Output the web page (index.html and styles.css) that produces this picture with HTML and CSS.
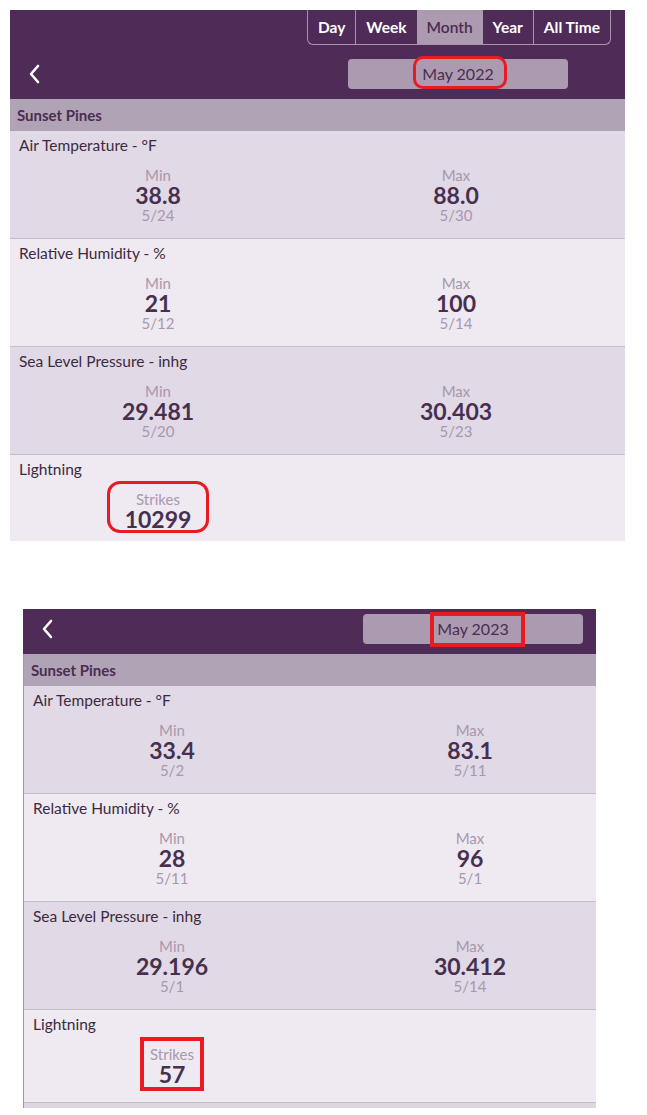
FILE: index.html
```html
<!DOCTYPE html>
<html lang="en">
<head>
<meta charset="utf-8">
<title>Sunset Pines – Monthly Summary</title>
<link rel="stylesheet" href="styles.css">
</head>
<body>
<div class="panel panel-a">
  <div class="header header-a">
    <div class="tabs-row">
      <div class="tabs">
        <span class="tab">Day</span>
        <span class="tab">Week</span>
        <span class="tab active">Month</span>
        <span class="tab">Year</span>
        <span class="tab">All Time</span>
      </div>
    </div>
    <div class="date-row">
      <div class="back">
        <svg width="12" height="20" viewBox="0 0 12 20"><path d="M10 2 L3 10 L10 18" fill="none" stroke="#fff" stroke-width="2.6" stroke-linecap="round" stroke-linejoin="round"/></svg>
      </div>
      <div class="pill"><span class="mark mark-date-a">May 2022</span></div>
    </div>
  </div>
  <div class="body">
    <div class="station">Sunset Pines</div>
    <div class="section dark">
      <div class="title">Air Temperature - °F</div>
      <div class="stats">
        <div class="stat"><div class="label">Min</div><div class="value">38.8</div><div class="date">5/24</div></div>
        <div class="stat"><div class="label">Max</div><div class="value">88.0</div><div class="date">5/30</div></div>
      </div>
    </div>
    <div class="section light">
      <div class="title">Relative Humidity - %</div>
      <div class="stats">
        <div class="stat"><div class="label">Min</div><div class="value">21</div><div class="date">5/12</div></div>
        <div class="stat"><div class="label">Max</div><div class="value">100</div><div class="date">5/14</div></div>
      </div>
    </div>
    <div class="section dark">
      <div class="title">Sea Level Pressure - inhg</div>
      <div class="stats">
        <div class="stat"><div class="label">Min</div><div class="value">29.481</div><div class="date">5/20</div></div>
        <div class="stat"><div class="label">Max</div><div class="value">30.403</div><div class="date">5/23</div></div>
      </div>
    </div>
    <div class="section light lightning cut">
      <div class="title">Lightning</div>
      <div class="stats">
        <div class="stat"><div class="strike-box mark-strikes-a"><div class="label">Strikes</div><div class="value">10299</div></div></div>
      </div>
    </div>
  </div>
</div>

<div class="panel panel-b">
  <div class="header header-b">
    <div class="date-row">
      <div class="back">
        <svg width="12" height="20" viewBox="0 0 12 20"><path d="M10 2 L3 10 L10 18" fill="none" stroke="#fff" stroke-width="2.6" stroke-linecap="round" stroke-linejoin="round"/></svg>
      </div>
      <div class="pill pill-b"><span class="mark mark-date-b">May 2023</span></div>
    </div>
  </div>
  <div class="body">
    <div class="station">Sunset Pines</div>
    <div class="section dark">
      <div class="title">Air Temperature - °F</div>
      <div class="stats">
        <div class="stat"><div class="label">Min</div><div class="value">33.4</div><div class="date">5/2</div></div>
        <div class="stat"><div class="label">Max</div><div class="value">83.1</div><div class="date">5/11</div></div>
      </div>
    </div>
    <div class="section light">
      <div class="title">Relative Humidity - %</div>
      <div class="stats">
        <div class="stat"><div class="label">Min</div><div class="value">28</div><div class="date">5/11</div></div>
        <div class="stat"><div class="label">Max</div><div class="value">96</div><div class="date">5/1</div></div>
      </div>
    </div>
    <div class="section dark">
      <div class="title">Sea Level Pressure - inhg</div>
      <div class="stats">
        <div class="stat"><div class="label">Min</div><div class="value">29.196</div><div class="date">5/1</div></div>
        <div class="stat"><div class="label">Max</div><div class="value">30.412</div><div class="date">5/14</div></div>
      </div>
    </div>
    <div class="section light lightning">
      <div class="title">Lightning</div>
      <div class="stats">
        <div class="stat"><div class="strike-box mark-strikes-b"><div class="label">Strikes</div><div class="value">57</div></div></div>
      </div>
    </div>
    <div class="strip"></div>
  </div>
</div>
</body>
</html>
```

FILE: styles.css
```css
*, *::before, *::after { box-sizing: border-box; }

body {
  margin: 0;
  background: #ffffff;
  font-family: Lato, "Liberation Sans", sans-serif;
}

.panel { background: #efe9f1; }
.panel-a { width: 615px; margin: 10px 0 0 10px; }
.panel-b { width: 573px; margin: 68px 0 0 23px; }

.header { background: #4f2c57; }
.header-a { height: 89px; }
.header-b { height: 45px; padding-top: 5px; }

.tabs-row {
  display: flex;
  justify-content: flex-end;
  padding-right: 14px;
}
.tabs {
  display: flex;
  height: 35px;
  border: 1px solid #a794ad;
  border-top: none;
  border-radius: 0 0 6px 6px;
  overflow: hidden;
}
.tab {
  padding: 0 10px;
  color: #ffffff;
  font-weight: 700;
  font-size: 15.5px;
  line-height: 34px;
  border-left: 1px solid #a794ad;
}
.tab:first-child { border-left: none; }
.tab.active {
  background: #ab9ab0;
  color: #4a2d50;
  border-left: none;
  font-weight: 600;
}
.tab.active + .tab { border-left: none; }

.date-row {
  display: grid;
  grid-template-columns: 296px 304px;
  align-items: center;
  height: 30px;
}
.header-a .date-row { margin-top: 14px; }

.back {
  padding-left: 18px;
  display: flex;
  align-items: center;
}
.back svg { display: block; }

.pill {
  justify-self: center;
  width: 220px;
  height: 30px;
  background: #ac9bb0;
  border-radius: 4px;
  text-align: center;
  font-size: 16px;
  line-height: 30px;
  color: #4a2d50;
}
.pill-b { margin-left: 4px; }

.mark {
  position: relative;
  display: inline-block;
}
.mark::after {
  content: "";
  position: absolute;
  border: 3px solid #ea1a22;
}
.mark-date-a::after {
  top: -3px; bottom: 0; left: -9px; right: -13px;
  border-radius: 10px;
  border-width: 3.5px;
}
.mark-date-b::after {
  top: -2px; bottom: -3px; left: -7px; right: -16px;
  border-width: 4px;
}

.panel-b .body { border-left: 1px solid #a88fb0; }

.station {
  height: 32px;
  padding-left: 7px;
  background: #b1a3b6;
  color: #4a2d51;
  font-weight: 700;
  font-size: 15px;
  line-height: 32px;
}

.section {
  padding: 4px 0 14px;
  border-bottom: 1px solid #c6bdc9;
}
.section.dark { background: #e1d9e5; }
.section.light { background: #efe9f1; }
.section.lightning { padding-bottom: 16px; }
.section.cut { height: 86px; overflow: hidden; border-bottom: none; }

.title {
  padding-left: 9px;
  margin-bottom: 11px;
  font-size: 15.5px;
  line-height: 20px;
  color: #3b2b40;
}

.stats {
  display: grid;
  grid-template-columns: 296px 300px;
}
.stat { text-align: center; }

.label {
  font-size: 15px;
  line-height: 18px;
  color: #a898ad;
}
.value {
  font-size: 23px;
  font-weight: 700;
  line-height: 22px;
  color: #47304f;
}
.date {
  font-size: 15px;
  line-height: 18px;
  color: #a898ad;
}

.strike-box {
  position: relative;
  display: inline-block;
}
.strike-box::after {
  content: "";
  position: absolute;
  left: 50%;
  transform: translateX(-50%);
  border: 3.5px solid #ea1a22;
}
.mark-strikes-a::after {
  top: -9px;
  bottom: -3px;
  width: 102px;
  border-radius: 13px;
}
.mark-strikes-b::after {
  top: -8px;
  bottom: -6px;
  width: 64px;
  border-width: 4px;
}

.strip {
  height: 5px;
  background: #ddd5df;
}
```
